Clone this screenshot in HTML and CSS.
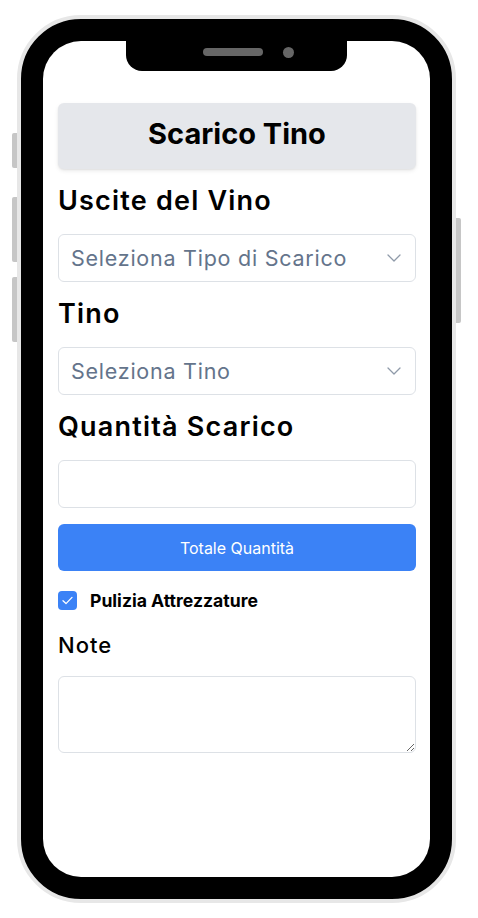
FILE: index.html
```html
<!DOCTYPE html>
<html lang="it">
<head>
<meta charset="utf-8">
<title>Scarico Tino</title>
<link rel="stylesheet" href="styles.css">
</head>
<body>
<div class="stage">
  <div class="phone">
    <span class="side-btn btn-l1"></span>
    <span class="side-btn btn-l2"></span>
    <span class="side-btn btn-l3"></span>
    <span class="side-btn btn-r"></span>
    <div class="screen">
      <div class="notch"><span class="speaker"></span><span class="camera"></span></div>
      <div class="header"><h1 class="title">Scarico Tino</h1></div>

      <h2 class="label">Uscite del Vino</h2>
      <div class="select">
        <span class="placeholder">Seleziona Tipo di Scarico</span>
        <svg class="chev" width="14" height="8" viewBox="0 0 14 8"><polyline points="1,1 7,7 13,1" fill="none" stroke="#8f9aa9" stroke-width="1.3" stroke-linecap="round" stroke-linejoin="round"/></svg>
      </div>

      <h2 class="label">Tino</h2>
      <div class="select">
        <span class="placeholder">Seleziona Tino</span>
        <svg class="chev" width="14" height="8" viewBox="0 0 14 8"><polyline points="1,1 7,7 13,1" fill="none" stroke="#8f9aa9" stroke-width="1.3" stroke-linecap="round" stroke-linejoin="round"/></svg>
      </div>

      <h2 class="label">Quantità Scarico</h2>
      <input class="field" type="text">

      <button class="primary" type="button">Totale Quantità</button>

      <div class="check-row">
        <span class="checkbox">
          <svg width="19" height="19" viewBox="0 0 19 19"><polyline points="5,9.8 8,12.6 14,6.4" fill="none" stroke="#fff" stroke-width="1.3" stroke-linecap="round" stroke-linejoin="round"/></svg>
        </span>
        <span class="check-label">Pulizia Attrezzature</span>
      </div>

      <h3 class="note-label">Note</h3>
      <textarea class="notes"></textarea>
    </div>
  </div>
</div>
</body>
</html>
```

FILE: styles.css
```css
* {
  box-sizing: border-box;
  margin: 0;
  padding: 0;
}

body {
  background: #ffffff;
  font-family: Inter, "Noto Sans", sans-serif;
  color: #000;
}

.stage {
  padding: 15px 0 0 17px;
}

.phone {
  position: relative;
  width: 439px;
  height: 888px;
  border: 4px solid #e7e7e7;
  border-radius: 64px;
  background: #000;
  padding: 22px;
}

.side-btn {
  position: absolute;
  width: 5px;
  background: #c6c6c6;
  border-radius: 2px 0 0 2px;
}

.btn-l1 { left: -9px; top: 114px; height: 35px; }
.btn-l2 { left: -9px; top: 178px; height: 65px; }
.btn-l3 { left: -9px; top: 258px; height: 65px; }
.btn-r  { right: -9px; top: 199px; height: 105px; border-radius: 0 2px 2px 0; }

.screen {
  position: relative;
  width: 100%;
  height: 100%;
  background: #fff;
  border-radius: 38px;
  overflow: hidden;
  padding: 62px 14px 0 15px;
  display: flex;
  flex-direction: column;
}

.notch {
  position: absolute;
  left: 83px;
  top: 0;
  width: 221px;
  height: 30px;
  background: #000;
  border-radius: 0 0 16px 16px;
  display: flex;
  align-items: flex-start;
  padding: 7px 0 0 77px;
  gap: 19.5px;
}

.speaker {
  width: 60px;
  height: 8px;
  border-radius: 4px;
  background: #666;
}

.camera {
  width: 11px;
  height: 11px;
  margin-top: -1.5px;
  border-radius: 50%;
  background: #666;
}

.header {
  height: 66px;
  background: #e5e7eb;
  border-radius: 6px;
  box-shadow: 0 2px 4px rgba(0, 0, 0, 0.08), 0 1px 2px rgba(0, 0, 0, 0.06);
  display: flex;
  align-items: center;
  justify-content: center;
  padding-bottom: 4px;
}

.title {
  font-size: 29px;
  font-weight: 700;
  line-height: 1.21;
  color: #000;
}

.label {
  font-size: 27px;
  font-weight: 600;
  letter-spacing: 1.2px;
  line-height: 30px;
  margin: 16.5px 0 18.5px;
  color: #000;
}

.select {
  height: 48px;
  border: 1px solid #dde1e6;
  border-radius: 6px;
  display: flex;
  align-items: center;
  justify-content: space-between;
  padding: 0 14px 0 12px;
}

.placeholder {
  font-size: 21.5px;
  letter-spacing: 0.75px;
  color: #64748b;
}

.chev {
  display: block;
}

.field {
  display: block;
  width: 100%;
  height: 48px;
  border: 1px solid #dde1e6;
  border-radius: 6px;
  background: #fff;
  font: inherit;
}

.primary {
  margin-top: 16px;
  height: 47px;
  width: 100%;
  border: none;
  border-radius: 6px;
  background: #3b82f6;
  color: #fff;
  font-family: Inter, "Noto Sans", sans-serif;
  font-size: 16px;
  font-weight: 400;
}

.check-row {
  margin-top: 20px;
  height: 19px;
  display: flex;
  align-items: center;
  gap: 13px;
}

.checkbox {
  width: 19px;
  height: 19px;
  border-radius: 4px;
  background: #3b82f6;
  display: block;
}

.checkbox svg {
  display: block;
}

.check-label {
  font-size: 17.6px;
  font-weight: 700;
  color: #000;
}

.note-label {
  font-size: 22px;
  font-weight: 500;
  letter-spacing: 1px;
  line-height: 26px;
  margin: 22px 0 18px;
  color: #000;
}

.notes {
  display: block;
  width: 100%;
  height: 77px;
  border: 1px solid #dde1e6;
  border-radius: 6px;
  background: #fff;
  font: inherit;
}
```
